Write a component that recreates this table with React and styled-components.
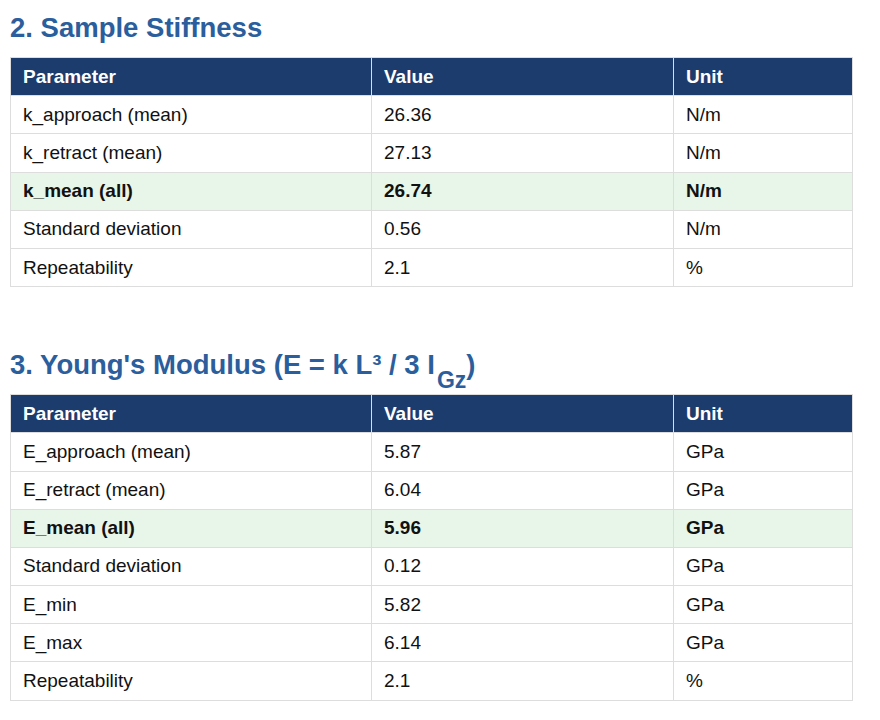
import styled, { createGlobalStyle } from 'styled-components';

const GlobalStyle = createGlobalStyle`
  body {
    margin: 0;
    background: #fff;
    font-family: "Liberation Sans", Arial, sans-serif;
    color: #111;
  }
`;

const sections = [
  {
    title: <>2. Sample Stiffness</>,
    rows: [
      ['k_approach (mean)', '26.36', 'N/m'],
      ['k_retract (mean)', '27.13', 'N/m'],
      ['k_mean (all)', '26.74', 'N/m', true],
      ['Standard deviation', '0.56', 'N/m'],
      ['Repeatability', '2.1', '%']
    ]
  },
  {
    title: (
      <>
        3. Young's Modulus (E = k L³ / 3 I<sub>Gz</sub>)
      </>
    ),
    rows: [
      ['E_approach (mean)', '5.87', 'GPa'],
      ['E_retract (mean)', '6.04', 'GPa'],
      ['E_mean (all)', '5.96', 'GPa', true],
      ['Standard deviation', '0.12', 'GPa'],
      ['E_min', '5.82', 'GPa'],
      ['E_max', '6.14', 'GPa'],
      ['Repeatability', '2.1', '%']
    ]
  }
];

const App = () => (
  <Page>
    <GlobalStyle />
    {sections.map((section, i) => (
      <Section key={i}>
        <Heading>{section.title}</Heading>
        <Table>
          <colgroup>
            <col style={{ width: '361px' }} />
            <col style={{ width: '302px' }} />
            <col />
          </colgroup>
          <thead>
            <tr>
              <Th>Parameter</Th>
              <Th>Value</Th>
              <Th>Unit</Th>
            </tr>
          </thead>
          <tbody>
            {section.rows.map(([name, value, unit, highlight]) => (
              <Row key={name} $highlight={highlight}>
                <Td>{name}</Td>
                <Td>{value}</Td>
                <Td>{unit}</Td>
              </Row>
            ))}
          </tbody>
        </Table>
      </Section>
    ))}
  </Page>
);

export default App;

const Page = styled.main`
  padding: 12px 10px 20px;
  width: 843px;
`;

const Section = styled.section`
  & + & {
    margin-top: 62px;
  }
`;

const Heading = styled.h2`
  margin: 0 0 14px;
  font-size: 27.5px;
  line-height: 31px;
  font-weight: 700;
  color: #2b5e9c;

  sub {
    font-size: 23px;
    line-height: 0;
    vertical-align: -14px;
    margin-left: 2px;
  }
`;

const Table = styled.table`
  width: 843px;
  border-collapse: collapse;
  table-layout: fixed;
  font-size: 19px;
`;

const Th = styled.th`
  background: #1c3c6e;
  color: #fff;
  text-align: left;
  font-weight: 700;
  height: 38.2px;
  padding: 0 12px;
  border: 1px solid #dddddd;
  box-sizing: border-box;
`;

const Row = styled.tr`
  background: ${(p) => (p.$highlight ? '#e8f5e9' : '#fff')};
  font-weight: ${(p) => (p.$highlight ? 700 : 400)};
`;

const Td = styled.td`
  height: 38.2px;
  padding: 0 12px;
  border: 1px solid #dddddd;
  box-sizing: border-box;
`;
